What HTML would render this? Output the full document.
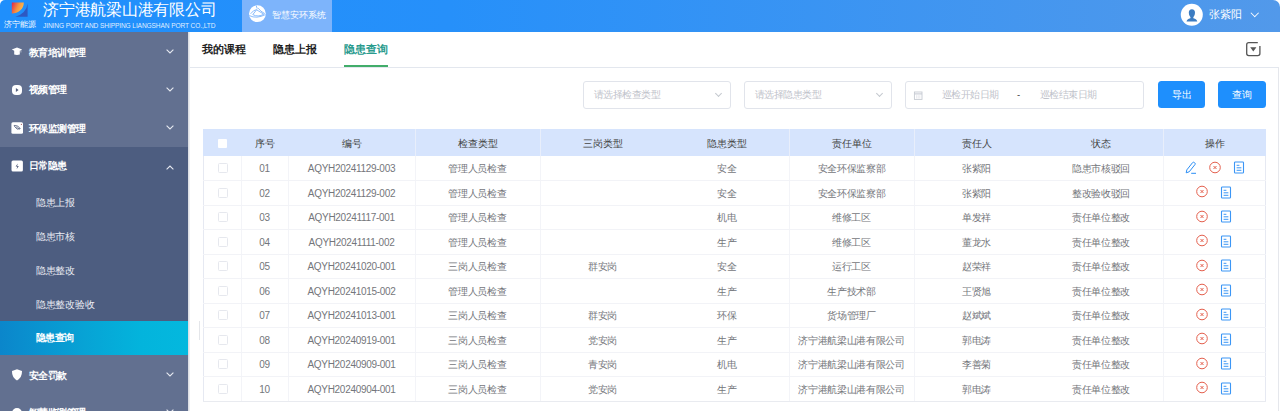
<!DOCTYPE html>
<html><head><meta charset="utf-8">
<style>
*{box-sizing:border-box;margin:0;padding:0}
html,body{width:1280px;height:411px;overflow:hidden;background:#fff;font-family:"Liberation Sans",sans-serif;position:relative}
.abs{position:absolute}
#hdr{position:absolute;left:0;top:0;width:1280px;height:32px;border-radius:5px 7px 0 0;background:linear-gradient(90deg,#1f8ffc 0%,#2690fa 35%,#5299ea 100%);overflow:hidden}
.wt{position:absolute;color:#fff;white-space:nowrap}
#side{position:absolute;left:0;top:32px;width:188px;height:379px;background:#627090;overflow:hidden}
.mi{position:absolute;left:0;width:188px;height:38px;color:#fff;font-size:10px;font-weight:bold}
.mi .t{position:absolute;left:28.5px;top:0;line-height:38px;letter-spacing:-0.5px}
.mi .ic{position:absolute;left:11px;top:13px}
.mi .chv{position:absolute;left:166px;top:15.5px}
.mi .ch{position:absolute;left:166px;top:16px;width:6px;height:6px;border-right:1px solid #e3e6ee;border-bottom:1px solid #e3e6ee;transform:rotate(45deg)}
.mi .ch.up{transform:rotate(-135deg);top:19px}
#sub{position:absolute;left:0;top:115px;width:188px;height:208px;background:#4d5d80}
.si{position:absolute;left:0;width:188px;height:34px;line-height:34px;color:#e9ecf3;font-size:10px;padding-left:36px;letter-spacing:-0.3px}
.si.act{background:linear-gradient(90deg,#0b86cb 0%,#07a3d5 45%,#03b4dc 75%,#04b8de 100%);color:#fff;font-weight:bold;height:33.8px;letter-spacing:-0.6px}
.tab{position:absolute;top:32px;line-height:35px;font-size:11px;font-weight:bold;color:#1f1f1f}
.sel{position:absolute;top:81px;height:28px;border:1px solid #e1e4eb;border-radius:3px;background:#fff}
.ph{position:absolute;top:0;line-height:25px;font-size:9.5px;color:#bfc3cb;white-space:nowrap;letter-spacing:-0.55px}
.dch{position:absolute;width:5px;height:5px;border-right:1px solid #c4c8cf;border-bottom:1px solid #c4c8cf;transform:rotate(45deg)}
.btn{position:absolute;top:81px;height:27px;border-radius:3.5px;background:#1e8ffd;color:#fff;font-size:9.5px;line-height:27px;text-align:center}
.hc{position:absolute;height:27px;line-height:29px;text-align:center;font-size:9.5px;color:#444;white-space:nowrap}
.bc{position:absolute;height:24.5px;line-height:26.5px;text-align:center;font-size:9.5px;color:#74767b;white-space:nowrap;letter-spacing:-0.3px}
.bc.lat{letter-spacing:-0.3px;font-size:10px}
.cb{width:10px;height:10px;border:1px solid #e6e8ee;border-radius:1.5px;background:#fff}
</style></head><body>
<div id="hdr">
  <svg class="abs" style="left:0;top:0" width="40" height="32" viewBox="0 0 40 32">
    <defs><linearGradient id="og" x1="0" y1="0.2" x2="1" y2="0.6"><stop offset="0" stop-color="#e1304c"/><stop offset="0.5" stop-color="#f5933f"/><stop offset="1" stop-color="#fdc252"/></linearGradient></defs>
    <path d="M27.6,3.6 V16.7 H15.2 A15.5,14.6 0 0 0 27.6,3.6 Z" fill="#2d58c2"/>
    <path d="M11.8,2.4 H23.8 A12,11.2 0 0 1 11.8,13.6 Z" fill="url(#og)"/>
  </svg>
  <div class="wt" style="left:4px;top:19px;font-size:8px;line-height:12px;letter-spacing:0px">济宁能源</div>
  <div class="wt" style="left:43px;top:-1.8px;font-size:16px;line-height:23px;letter-spacing:-0.25px">济宁港航梁山港有限公司</div>
  <div class="wt" style="left:43px;top:21px;font-size:6.6px;line-height:9px;letter-spacing:-0.11px;color:rgba(255,255,255,0.88)">JINING PORT AND SHIPPING LIANGSHAN PORT CO.,LTD</div>
  <div class="abs" style="left:242px;top:0;width:90px;height:32px;background:#7db4fb"></div>
  <svg class="abs" style="left:248px;top:5px" width="19" height="19" viewBox="0 0 19 19">
    <circle cx="9.4" cy="8.7" r="8.4" fill="#fff"/>
    <path d="M2.6,8.8 Q5.5,4.8 8.7,4.6 M4.8,9.6 L8.6,4.8 L15.8,9.2 Q10,12.5 4.8,9.6 Z M10.2,3.2 Q12.5,6.5 16.8,8.6 M1.4,10.6 Q8.5,14.2 17.4,9.6 M8.2,0.6 L9.2,3.6" fill="none" stroke="#7db4fb" stroke-width="0.9"/>
  </svg>
  <div class="wt" style="left:272px;top:8.7px;font-size:9px;line-height:13px;letter-spacing:-0.1px">智慧安环系统</div>
  <svg class="abs" style="left:1180px;top:3px" width="24" height="24" viewBox="0 0 24 24">
    <circle cx="11.8" cy="11.8" r="11" fill="#fff"/>
    <path d="M11.9,6.3 Q15,6.3 15,9.8 Q15,13 13.3,14.3 L13.4,15.3 Q16.9,16.2 17.3,18.6 H6.5 Q6.9,16.2 10.4,15.3 L10.5,14.3 Q8.8,13 8.8,9.8 Q8.8,6.3 11.9,6.3 Z" fill="#3c7cc2"/>
  </svg>
  <div class="wt" style="left:1209px;top:5px;font-size:11px;line-height:19px;letter-spacing:-0.2px">张紫阳</div>
  <div class="abs" style="left:1252px;top:10px;width:5.5px;height:5.5px;border-right:1px solid #fff;border-bottom:1px solid #fff;transform:rotate(45deg)"></div>
</div>
<div id="side">
  <div class="mi" style="top:1.5px"><svg class="ic" style="top:11.5px" width="12" height="12" viewBox="0 0 12 12"><path d="M0.8,4.6 L6,2.6 L11.2,4.6 L10.2,5.1 V7.6 L9.7,7.6 V5.3 L8.8,5.7 V9.6 Q6,10.4 3.2,9.6 V5.7 Z" fill="#fff"/></svg><span class="t">教育培训管理</span><svg class="chv" width="8" height="5" viewBox="0 0 8 5"><path d="M0.6,0.6 L4,4 L7.4,0.6" fill="none" stroke="#e6e9f0" stroke-width="1.1"/></svg></div>
  <div class="mi" style="top:39.3px"><svg class="ic" width="12" height="12" viewBox="0 0 12 12"><rect x="1" y="1" width="10" height="10" rx="4" fill="#fff"/><path d="M4.9,4 L7.6,6 L4.9,8 Z" fill="#55607e"/></svg><span class="t">视频管理</span><svg class="chv" width="8" height="5" viewBox="0 0 8 5"><path d="M0.6,0.6 L4,4 L7.4,0.6" fill="none" stroke="#e6e9f0" stroke-width="1.1"/></svg></div>
  <div class="mi" style="top:77.6px"><svg class="ic" style="top:12px" width="13" height="13" viewBox="0 0 13 13"><rect x="0.4" y="0.2" width="11.6" height="11.6" rx="1.5" fill="#fff"/><path d="M3.2,3.4 Q7.4,3.2 9.2,6.6 Q6.2,8.6 3.6,4.6 Z" fill="none" stroke="#56617f" stroke-width="0.9"/><path d="M5.2,5 L8.6,7.2" stroke="#56617f" stroke-width="0.7"/><circle cx="10.4" cy="2.4" r="0.6" fill="#b06a6a"/></svg><span class="t">环保监测管理</span><svg class="chv" width="8" height="5" viewBox="0 0 8 5"><path d="M0.6,0.6 L4,4 L7.4,0.6" fill="none" stroke="#e6e9f0" stroke-width="1.1"/></svg></div>
  <div id="sub">
    <div class="mi" style="top:0"><svg class="ic" width="13" height="13" viewBox="0 0 13 13"><rect x="0.5" y="0.5" width="11.4" height="11" rx="1.5" fill="#fff"/><path d="M6.8,3.4 L4.6,6.6 H6.3 L5.6,9.2 L7.8,5.9 H6.1 Z" fill="#4d5878"/></svg><span class="t">日常隐患</span><svg class="chv" style="top:17.5px" width="8" height="5" viewBox="0 0 8 5"><path d="M0.6,4.4 L4,1 L7.4,4.4" fill="none" stroke="#e6e9f0" stroke-width="1.1"/></svg></div>
    <div class="si" style="top:38.7px">隐患上报</div>
    <div class="si" style="top:72.7px">隐患市核</div>
    <div class="si" style="top:106.7px">隐患整改</div>
    <div class="si" style="top:140.7px">隐患整改验收</div>
    <div class="si act" style="top:174.2px">隐患查询</div>
  </div>
  <div class="mi" style="top:324.5px"><svg class="ic" style="top:12px" width="12" height="12" viewBox="0 0 12 12"><path d="M6,0.3 L11,2.1 Q11.2,8.6 6,11.4 Q0.8,8.6 1,2.1 Z" fill="#fff"/></svg><span class="t">安全罚款</span><svg class="chv" width="8" height="5" viewBox="0 0 8 5"><path d="M0.6,0.6 L4,4 L7.4,0.6" fill="none" stroke="#e6e9f0" stroke-width="1.1"/></svg></div>
  <div class="mi" style="top:361.5px"><svg class="ic" width="12" height="12" viewBox="0 0 12 12"><circle cx="6" cy="6" r="5" fill="#fff"/></svg><span class="t">智慧监测管理</span><svg class="chv" width="8" height="5" viewBox="0 0 8 5"><path d="M0.6,0.6 L4,4 L7.4,0.6" fill="none" stroke="#e6e9f0" stroke-width="1.1"/></svg></div>
</div>
<div class="abs" style="left:188px;top:32px;width:2px;height:379px;background:linear-gradient(90deg,#d5d8df,#f4f5f7)"></div>
<div class="abs" style="left:199px;top:321px;width:1px;height:19px;background:#e4e6ea"></div>
<div class="abs" style="left:1278px;top:67px;width:1px;height:344px;background:#e5e7ec"></div>
<span class="tab" style="left:202px">我的课程</span>
<span class="tab" style="left:273px">隐患上报</span>
<span class="tab" style="left:344px;color:#2a9b8e">隐患查询</span>
<div class="abs" style="left:344px;top:65px;width:44px;height:2px;background:#42ad6a"></div>
<div class="abs" style="left:190px;top:67px;width:1088px;height:1px;background:#e3e7ee"></div>
<svg class="abs" style="left:1245px;top:41px" width="17" height="16" viewBox="0 0 17 16">
  <path d="M12.8,1.7 H3.8 Q1.7,1.7 1.7,3.8 V12.5 Q1.7,14.6 3.8,14.6 H12.8 Q14.9,14.6 14.9,12.5 V5" fill="none" stroke="#555" stroke-width="1.3"/>
  <path d="M5.2,6.3 H11.4 L8.3,10.6 Z" fill="#555"/>
</svg>
<div class="sel" style="left:583px;width:148px"><span class="ph" style="left:10px">请选择检查类型</span><i class="dch" style="left:132px;top:9px"></i></div>
<div class="sel" style="left:744px;width:148px"><span class="ph" style="left:10px">请选择隐患类型</span><i class="dch" style="left:132px;top:9px"></i></div>
<div class="sel" style="left:905px;width:239px">
  <svg class="abs" style="left:7px;top:8.5px" width="10" height="9" viewBox="0 0 10 9"><rect x="1.4" y="1" width="7.6" height="7.4" fill="none" stroke="#c6cad2" stroke-width="0.9"/><path d="M1.4,2.9 H9" stroke="#c6cad2" stroke-width="1.1"/><path d="M3.6,4.2 V7.6 M5.2,4.2 V7.6 M6.8,4.2 V7.6" stroke="#e3e5ea" stroke-width="0.8"/></svg>
  <span class="ph" style="left:36px">巡检开始日期</span>
  <span class="ph" style="left:111px;color:#303133">-</span>
  <span class="ph" style="left:134px">巡检结束日期</span>
</div>
<div class="btn" style="left:1158px;width:47px">导出</div>
<div class="btn" style="left:1218px;width:48px">查询</div>
<div class="abs" style="left:203px;top:129px;width:1063px;height:27px;background:#d6e4fd"></div>
<div class="abs" style="left:415px;top:129px;width:1px;height:27px;background:#e8eefb"></div>
<div class="abs" style="left:540px;top:129px;width:1px;height:27px;background:#e8eefb"></div>
<div class="abs" style="left:789px;top:129px;width:1px;height:27px;background:#e8eefb"></div>
<div class="abs" style="left:914px;top:129px;width:1px;height:27px;background:#e8eefb"></div>
<div class="abs" style="left:1163px;top:129px;width:1px;height:27px;background:#e8eefb"></div>
<div class="abs" style="left:217.5px;top:139px;width:9.5px;height:9px;background:#fff;border-radius:1px"></div>
<div class="hc" style="left:241px;top:129px;width:47px">序号</div>
<div class="hc" style="left:288px;top:129px;width:127px">编号</div>
<div class="hc" style="left:415px;top:129px;width:125px">检查类型</div>
<div class="hc" style="left:540px;top:129px;width:125px">三岗类型</div>
<div class="hc" style="left:665px;top:129px;width:124px">隐患类型</div>
<div class="hc" style="left:789px;top:129px;width:125px">责任单位</div>
<div class="hc" style="left:914px;top:129px;width:125px">责任人</div>
<div class="hc" style="left:1039px;top:129px;width:124px">状态</div>
<div class="hc" style="left:1163px;top:129px;width:103px">操作</div>
<div class="abs" style="left:241px;top:156px;width:1px;height:245.0px;background:#f3f4f8"></div>
<div class="abs" style="left:288px;top:156px;width:1px;height:245.0px;background:#f3f4f8"></div>
<div class="abs" style="left:415px;top:156px;width:1px;height:245.0px;background:#f3f4f8"></div>
<div class="abs" style="left:540px;top:156px;width:1px;height:245.0px;background:#f3f4f8"></div>
<div class="abs" style="left:789px;top:156px;width:1px;height:245.0px;background:#f3f4f8"></div>
<div class="abs" style="left:914px;top:156px;width:1px;height:245.0px;background:#f3f4f8"></div>
<div class="abs" style="left:1163px;top:156px;width:1px;height:245.0px;background:#f3f4f8"></div>
<div class="abs" style="left:203px;top:156px;width:1px;height:245.0px;background:#e6e9f2"></div>
<div class="abs" style="left:1265px;top:156px;width:1px;height:245.0px;background:#e6e9f2"></div>
<div class="abs" style="left:203px;top:180.0px;width:1063px;height:1px;background:#f2f3f7"></div>
<div class="abs cb" style="left:217.5px;top:163.0px"></div>
<div class="bc lat" style="left:241px;top:156.0px;width:47px">01</div>
<div class="bc lat" style="left:288px;top:156.0px;width:127px">AQYH20241129-003</div>
<div class="bc" style="left:415px;top:156.0px;width:125px">管理人员检查</div>
<div class="bc" style="left:665px;top:156.0px;width:124px">安全</div>
<div class="bc" style="left:789px;top:156.0px;width:125px">安全环保监察部</div>
<div class="bc" style="left:914px;top:156.0px;width:125px">张紫阳</div>
<div class="bc" style="left:1039px;top:156.0px;width:124px">隐患市核驳回</div>
<svg class="abs" style="left:1184.5px;top:161.20px" width="12" height="13" viewBox="0 0 12 13"><path d="M1.2,11.8 L1.8,8.9 L7.6,1.6 Q8.4,0.8 9.3,1.5 L9.9,2 Q10.6,2.7 10,3.5 L4.2,10.8 Z" fill="none" stroke="#2b8ef5" stroke-width="1"/><path d="M6.2,12.3 H11" stroke="#2b8ef5" stroke-width="1"/></svg>
<svg class="abs" style="left:1208.6px;top:160.85px" width="12" height="13" viewBox="0 0 12 13"><circle cx="6" cy="6.5" r="5.3" fill="none" stroke="#e4604e" stroke-width="1"/><path d="M4.5,5 L7.5,8 M7.5,5 L4.5,8" stroke="#e4604e" stroke-width="1"/></svg>
<svg class="abs" style="left:1232.6px;top:161.10px" width="12" height="13" viewBox="0 0 12 13"><rect x="1.5" y="1" width="9" height="11" rx="0.8" fill="none" stroke="#3b96f6" stroke-width="1.1"/><path d="M3.6,4.3 H6.4 M3.6,6.8 H8.4 M3.6,9.3 H8.4" stroke="#3b96f6" stroke-width="1"/></svg>
<div class="abs" style="left:203px;top:204.5px;width:1063px;height:1px;background:#f2f3f7"></div>
<div class="abs cb" style="left:217.5px;top:187.5px"></div>
<div class="bc lat" style="left:241px;top:180.5px;width:47px">02</div>
<div class="bc lat" style="left:288px;top:180.5px;width:127px">AQYH20241129-002</div>
<div class="bc" style="left:415px;top:180.5px;width:125px">管理人员检查</div>
<div class="bc" style="left:665px;top:180.5px;width:124px">安全</div>
<div class="bc" style="left:789px;top:180.5px;width:125px">安全环保监察部</div>
<div class="bc" style="left:914px;top:180.5px;width:125px">张紫阳</div>
<div class="bc" style="left:1039px;top:180.5px;width:124px">整改验收驳回</div>
<svg class="abs" style="left:1196.2px;top:185.35px" width="12" height="13" viewBox="0 0 12 13"><circle cx="6" cy="6.5" r="5.3" fill="none" stroke="#e4604e" stroke-width="1"/><path d="M4.5,5 L7.5,8 M7.5,5 L4.5,8" stroke="#e4604e" stroke-width="1"/></svg>
<svg class="abs" style="left:1220px;top:185.60px" width="12" height="13" viewBox="0 0 12 13"><rect x="1.5" y="1" width="9" height="11" rx="0.8" fill="none" stroke="#3b96f6" stroke-width="1.1"/><path d="M3.6,4.3 H6.4 M3.6,6.8 H8.4 M3.6,9.3 H8.4" stroke="#3b96f6" stroke-width="1"/></svg>
<div class="abs" style="left:203px;top:229.0px;width:1063px;height:1px;background:#f2f3f7"></div>
<div class="abs cb" style="left:217.5px;top:212.0px"></div>
<div class="bc lat" style="left:241px;top:205.0px;width:47px">03</div>
<div class="bc lat" style="left:288px;top:205.0px;width:127px">AQYH20241117-001</div>
<div class="bc" style="left:415px;top:205.0px;width:125px">管理人员检查</div>
<div class="bc" style="left:665px;top:205.0px;width:124px">机电</div>
<div class="bc" style="left:789px;top:205.0px;width:125px">维修工区</div>
<div class="bc" style="left:914px;top:205.0px;width:125px">单发祥</div>
<div class="bc" style="left:1039px;top:205.0px;width:124px">责任单位整改</div>
<svg class="abs" style="left:1196.2px;top:209.85px" width="12" height="13" viewBox="0 0 12 13"><circle cx="6" cy="6.5" r="5.3" fill="none" stroke="#e4604e" stroke-width="1"/><path d="M4.5,5 L7.5,8 M7.5,5 L4.5,8" stroke="#e4604e" stroke-width="1"/></svg>
<svg class="abs" style="left:1220px;top:210.10px" width="12" height="13" viewBox="0 0 12 13"><rect x="1.5" y="1" width="9" height="11" rx="0.8" fill="none" stroke="#3b96f6" stroke-width="1.1"/><path d="M3.6,4.3 H6.4 M3.6,6.8 H8.4 M3.6,9.3 H8.4" stroke="#3b96f6" stroke-width="1"/></svg>
<div class="abs" style="left:203px;top:253.5px;width:1063px;height:1px;background:#f2f3f7"></div>
<div class="abs cb" style="left:217.5px;top:236.5px"></div>
<div class="bc lat" style="left:241px;top:229.5px;width:47px">04</div>
<div class="bc lat" style="left:288px;top:229.5px;width:127px">AQYH20241111-002</div>
<div class="bc" style="left:415px;top:229.5px;width:125px">管理人员检查</div>
<div class="bc" style="left:665px;top:229.5px;width:124px">生产</div>
<div class="bc" style="left:789px;top:229.5px;width:125px">维修工区</div>
<div class="bc" style="left:914px;top:229.5px;width:125px">董龙水</div>
<div class="bc" style="left:1039px;top:229.5px;width:124px">责任单位整改</div>
<svg class="abs" style="left:1196.2px;top:234.35px" width="12" height="13" viewBox="0 0 12 13"><circle cx="6" cy="6.5" r="5.3" fill="none" stroke="#e4604e" stroke-width="1"/><path d="M4.5,5 L7.5,8 M7.5,5 L4.5,8" stroke="#e4604e" stroke-width="1"/></svg>
<svg class="abs" style="left:1220px;top:234.60px" width="12" height="13" viewBox="0 0 12 13"><rect x="1.5" y="1" width="9" height="11" rx="0.8" fill="none" stroke="#3b96f6" stroke-width="1.1"/><path d="M3.6,4.3 H6.4 M3.6,6.8 H8.4 M3.6,9.3 H8.4" stroke="#3b96f6" stroke-width="1"/></svg>
<div class="abs" style="left:203px;top:278.0px;width:1063px;height:1px;background:#f2f3f7"></div>
<div class="abs cb" style="left:217.5px;top:261.0px"></div>
<div class="bc lat" style="left:241px;top:254.0px;width:47px">05</div>
<div class="bc lat" style="left:288px;top:254.0px;width:127px">AQYH20241020-001</div>
<div class="bc" style="left:415px;top:254.0px;width:125px">三岗人员检查</div>
<div class="bc" style="left:540px;top:254.0px;width:125px">群安岗</div>
<div class="bc" style="left:665px;top:254.0px;width:124px">安全</div>
<div class="bc" style="left:789px;top:254.0px;width:125px">运行工区</div>
<div class="bc" style="left:914px;top:254.0px;width:125px">赵荣祥</div>
<div class="bc" style="left:1039px;top:254.0px;width:124px">责任单位整改</div>
<svg class="abs" style="left:1196.2px;top:258.85px" width="12" height="13" viewBox="0 0 12 13"><circle cx="6" cy="6.5" r="5.3" fill="none" stroke="#e4604e" stroke-width="1"/><path d="M4.5,5 L7.5,8 M7.5,5 L4.5,8" stroke="#e4604e" stroke-width="1"/></svg>
<svg class="abs" style="left:1220px;top:259.10px" width="12" height="13" viewBox="0 0 12 13"><rect x="1.5" y="1" width="9" height="11" rx="0.8" fill="none" stroke="#3b96f6" stroke-width="1.1"/><path d="M3.6,4.3 H6.4 M3.6,6.8 H8.4 M3.6,9.3 H8.4" stroke="#3b96f6" stroke-width="1"/></svg>
<div class="abs" style="left:203px;top:302.5px;width:1063px;height:1px;background:#f2f3f7"></div>
<div class="abs cb" style="left:217.5px;top:285.5px"></div>
<div class="bc lat" style="left:241px;top:278.5px;width:47px">06</div>
<div class="bc lat" style="left:288px;top:278.5px;width:127px">AQYH20241015-002</div>
<div class="bc" style="left:415px;top:278.5px;width:125px">管理人员检查</div>
<div class="bc" style="left:665px;top:278.5px;width:124px">生产</div>
<div class="bc" style="left:789px;top:278.5px;width:125px">生产技术部</div>
<div class="bc" style="left:914px;top:278.5px;width:125px">王贤旭</div>
<div class="bc" style="left:1039px;top:278.5px;width:124px">责任单位整改</div>
<svg class="abs" style="left:1196.2px;top:283.35px" width="12" height="13" viewBox="0 0 12 13"><circle cx="6" cy="6.5" r="5.3" fill="none" stroke="#e4604e" stroke-width="1"/><path d="M4.5,5 L7.5,8 M7.5,5 L4.5,8" stroke="#e4604e" stroke-width="1"/></svg>
<svg class="abs" style="left:1220px;top:283.60px" width="12" height="13" viewBox="0 0 12 13"><rect x="1.5" y="1" width="9" height="11" rx="0.8" fill="none" stroke="#3b96f6" stroke-width="1.1"/><path d="M3.6,4.3 H6.4 M3.6,6.8 H8.4 M3.6,9.3 H8.4" stroke="#3b96f6" stroke-width="1"/></svg>
<div class="abs" style="left:203px;top:327.0px;width:1063px;height:1px;background:#f2f3f7"></div>
<div class="abs cb" style="left:217.5px;top:310.0px"></div>
<div class="bc lat" style="left:241px;top:303.0px;width:47px">07</div>
<div class="bc lat" style="left:288px;top:303.0px;width:127px">AQYH20241013-001</div>
<div class="bc" style="left:415px;top:303.0px;width:125px">三岗人员检查</div>
<div class="bc" style="left:540px;top:303.0px;width:125px">群安岗</div>
<div class="bc" style="left:665px;top:303.0px;width:124px">环保</div>
<div class="bc" style="left:789px;top:303.0px;width:125px">货场管理厂</div>
<div class="bc" style="left:914px;top:303.0px;width:125px">赵斌斌</div>
<div class="bc" style="left:1039px;top:303.0px;width:124px">责任单位整改</div>
<svg class="abs" style="left:1196.2px;top:307.85px" width="12" height="13" viewBox="0 0 12 13"><circle cx="6" cy="6.5" r="5.3" fill="none" stroke="#e4604e" stroke-width="1"/><path d="M4.5,5 L7.5,8 M7.5,5 L4.5,8" stroke="#e4604e" stroke-width="1"/></svg>
<svg class="abs" style="left:1220px;top:308.10px" width="12" height="13" viewBox="0 0 12 13"><rect x="1.5" y="1" width="9" height="11" rx="0.8" fill="none" stroke="#3b96f6" stroke-width="1.1"/><path d="M3.6,4.3 H6.4 M3.6,6.8 H8.4 M3.6,9.3 H8.4" stroke="#3b96f6" stroke-width="1"/></svg>
<div class="abs" style="left:203px;top:351.5px;width:1063px;height:1px;background:#f2f3f7"></div>
<div class="abs cb" style="left:217.5px;top:334.5px"></div>
<div class="bc lat" style="left:241px;top:327.5px;width:47px">08</div>
<div class="bc lat" style="left:288px;top:327.5px;width:127px">AQYH20240919-001</div>
<div class="bc" style="left:415px;top:327.5px;width:125px">三岗人员检查</div>
<div class="bc" style="left:540px;top:327.5px;width:125px">党安岗</div>
<div class="bc" style="left:665px;top:327.5px;width:124px">生产</div>
<div class="bc" style="left:789px;top:327.5px;width:125px">济宁港航梁山港有限公司</div>
<div class="bc" style="left:914px;top:327.5px;width:125px">郭电涛</div>
<div class="bc" style="left:1039px;top:327.5px;width:124px">责任单位整改</div>
<svg class="abs" style="left:1196.2px;top:332.35px" width="12" height="13" viewBox="0 0 12 13"><circle cx="6" cy="6.5" r="5.3" fill="none" stroke="#e4604e" stroke-width="1"/><path d="M4.5,5 L7.5,8 M7.5,5 L4.5,8" stroke="#e4604e" stroke-width="1"/></svg>
<svg class="abs" style="left:1220px;top:332.60px" width="12" height="13" viewBox="0 0 12 13"><rect x="1.5" y="1" width="9" height="11" rx="0.8" fill="none" stroke="#3b96f6" stroke-width="1.1"/><path d="M3.6,4.3 H6.4 M3.6,6.8 H8.4 M3.6,9.3 H8.4" stroke="#3b96f6" stroke-width="1"/></svg>
<div class="abs" style="left:203px;top:376.0px;width:1063px;height:1px;background:#f2f3f7"></div>
<div class="abs cb" style="left:217.5px;top:359.0px"></div>
<div class="bc lat" style="left:241px;top:352.0px;width:47px">09</div>
<div class="bc lat" style="left:288px;top:352.0px;width:127px">AQYH20240909-001</div>
<div class="bc" style="left:415px;top:352.0px;width:125px">三岗人员检查</div>
<div class="bc" style="left:540px;top:352.0px;width:125px">青安岗</div>
<div class="bc" style="left:665px;top:352.0px;width:124px">机电</div>
<div class="bc" style="left:789px;top:352.0px;width:125px">济宁港航梁山港有限公司</div>
<div class="bc" style="left:914px;top:352.0px;width:125px">李善菊</div>
<div class="bc" style="left:1039px;top:352.0px;width:124px">责任单位整改</div>
<svg class="abs" style="left:1196.2px;top:356.85px" width="12" height="13" viewBox="0 0 12 13"><circle cx="6" cy="6.5" r="5.3" fill="none" stroke="#e4604e" stroke-width="1"/><path d="M4.5,5 L7.5,8 M7.5,5 L4.5,8" stroke="#e4604e" stroke-width="1"/></svg>
<svg class="abs" style="left:1220px;top:357.10px" width="12" height="13" viewBox="0 0 12 13"><rect x="1.5" y="1" width="9" height="11" rx="0.8" fill="none" stroke="#3b96f6" stroke-width="1.1"/><path d="M3.6,4.3 H6.4 M3.6,6.8 H8.4 M3.6,9.3 H8.4" stroke="#3b96f6" stroke-width="1"/></svg>
<div class="abs" style="left:203px;top:400.5px;width:1063px;height:1px;background:#e9ebf0"></div>
<div class="abs cb" style="left:217.5px;top:383.5px"></div>
<div class="bc lat" style="left:241px;top:376.5px;width:47px">10</div>
<div class="bc lat" style="left:288px;top:376.5px;width:127px">AQYH20240904-001</div>
<div class="bc" style="left:415px;top:376.5px;width:125px">三岗人员检查</div>
<div class="bc" style="left:540px;top:376.5px;width:125px">党安岗</div>
<div class="bc" style="left:665px;top:376.5px;width:124px">生产</div>
<div class="bc" style="left:789px;top:376.5px;width:125px">济宁港航梁山港有限公司</div>
<div class="bc" style="left:914px;top:376.5px;width:125px">郭电涛</div>
<div class="bc" style="left:1039px;top:376.5px;width:124px">责任单位整改</div>
<svg class="abs" style="left:1196.2px;top:381.35px" width="12" height="13" viewBox="0 0 12 13"><circle cx="6" cy="6.5" r="5.3" fill="none" stroke="#e4604e" stroke-width="1"/><path d="M4.5,5 L7.5,8 M7.5,5 L4.5,8" stroke="#e4604e" stroke-width="1"/></svg>
<svg class="abs" style="left:1220px;top:381.60px" width="12" height="13" viewBox="0 0 12 13"><rect x="1.5" y="1" width="9" height="11" rx="0.8" fill="none" stroke="#3b96f6" stroke-width="1.1"/><path d="M3.6,4.3 H6.4 M3.6,6.8 H8.4 M3.6,9.3 H8.4" stroke="#3b96f6" stroke-width="1"/></svg>
</body></html>
